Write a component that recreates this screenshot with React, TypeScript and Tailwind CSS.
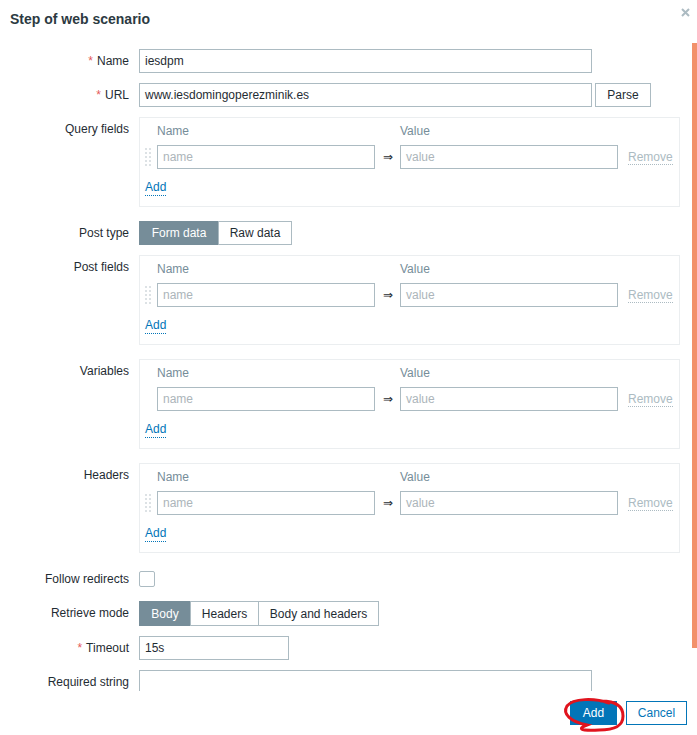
import React from 'react';

const Label: React.FC<{ text: string; required?: boolean }> = ({ text, required }) => (
  <div className="w-[129px] shrink-0 text-right h-[24px] leading-[24px] text-[#1f2c33]">
    {required && <span className="text-[#e45959] mr-[4px]">*</span>}
    {text}
  </div>
);

const Input: React.FC<{ value?: string; placeholder?: string; className?: string }> = ({ value, placeholder, className }) => (
  <div className={`h-[24px] border border-[#acbbc2] bg-white px-[5px] leading-[22px] ${className ?? ''}`}>
    {value ? <span className="text-[#1f2c33]">{value}</span> : <span className="text-[#acb5ba]">{placeholder}</span>}
  </div>
);

const DragHandle: React.FC<{ hidden?: boolean }> = ({ hidden }) => (
  <div className="w-[6px] h-[18px] grid grid-cols-2 gap-x-[2px] gap-y-[2px] content-center">
    {Array.from({ length: 10 }).map((_, i) => (
      <span key={i} className={`w-[2px] h-[2px] ${hidden ? '' : 'bg-[#dde2e5]'}`} />
    ))}
  </div>
);

const PairBox: React.FC<{ noHandle?: boolean }> = ({ noHandle }) => (
  <div className="w-[541px] h-[90px] border border-[#ebeef0] pt-[3px] pl-[5px] mb-[4px]">
    <div className="flex h-[20px] leading-[20px] text-[#768d99]">
      <div className="w-[12px]" />
      <div className="w-[218px]">Name</div>
      <div className="w-[25px]" />
      <div>Value</div>
    </div>
    <div className="flex items-center mt-[4px]">
      <DragHandle hidden={noHandle} />
      <div className="w-[6px]" />
      <Input placeholder="name" className="w-[218px]" />
      <div className="w-[25px] text-center text-[#1f2c33]">⇒</div>
      <Input placeholder="value" className="w-[218px]" />
      <span className="ml-[10px] text-[#acbbc2] border-b border-dotted border-[#acbbc2] leading-[14px]">Remove</span>
    </div>
    <div className="mt-[10px] h-[16px] leading-[16px]">
      <span className="text-[#0275b8] border-b border-dotted border-[#0275b8] pb-[1px]">Add</span>
    </div>
  </div>
);

const Segmented: React.FC<{ items: { label: string; w: string }[]; active: number; h: string }> = ({ items, active, h }) => (
  <div className={`flex ${h}`}>
    {items.map((it, i) => (
      <div
        key={it.label}
        className={`${it.w} flex items-center justify-center border ${i > 0 ? '-ml-px' : ''} ${
          i === active ? 'bg-[#768d99] border-[#768d99] text-white' : 'bg-white border-[#acbbc2] text-[#1f2c33]'
        }`}
      >
        {it.label}
      </div>
    ))}
  </div>
);

const Row: React.FC<{ label: string; required?: boolean; children: React.ReactNode }> = ({ label, required, children }) => (
  <div className="flex gap-[10px] items-start">
    <Label text={label} required={required} />
    {children}
  </div>
);

export default function App() {
  return (
    <div className="w-[697px] h-[735px] bg-white relative overflow-hidden font-['Liberation_Sans',Arial,sans-serif] text-[12px] text-[#1f2c33]">
      {/* Header */}
      <div className="h-[40px] flex items-center justify-between pl-[10px] pr-[7px]">
        <h1 className="text-[14px] font-bold text-[#2c3a42] -mt-[1px]">Step of web scenario</h1>
        <svg width="9" height="9" viewBox="0 0 9 9" className="self-start mt-[8px]">
          <path d="M1 1 L8 8 M8 1 L1 8" stroke="#acbbc2" strokeWidth="2" />
        </svg>
      </div>

      {/* Body */}
      <div className="flex h-[651px] overflow-hidden">
        <div className="w-[692px] pt-[9px] flex flex-col gap-[10px]">
          <Row label="Name" required>
            <Input value="iesdpm" className="w-[453px]" />
          </Row>
          <Row label="URL" required>
            <div className="flex gap-[3px]">
              <Input value="www.iesdomingoperezminik.es" className="w-[453px]" />
              <div className="w-[56px] h-[24px] border border-[#acbbc2] flex items-center justify-center">Parse</div>
            </div>
          </Row>
          <Row label="Query fields">
            <PairBox />
          </Row>
          <Row label="Post type">
            <Segmented
              h="h-[24px]"
              active={0}
              items={[
                { label: 'Form data', w: 'w-[80px]' },
                { label: 'Raw data', w: 'w-[74px]' },
              ]}
            />
          </Row>
          <Row label="Post fields">
            <PairBox />
          </Row>
          <Row label="Variables">
            <PairBox noHandle />
          </Row>
          <Row label="Headers">
            <PairBox />
          </Row>
          <Row label="Follow redirects">
            <div className="h-[24px] flex items-center">
              <div className="w-[16px] h-[16px] border border-[#acbbc2] rounded-[2px]" />
            </div>
          </Row>
          <Row label="Retrieve mode">
            <Segmented
              h="h-[25px]"
              active={0}
              items={[
                { label: 'Body', w: 'w-[52px]' },
                { label: 'Headers', w: 'w-[69px]' },
                { label: 'Body and headers', w: 'w-[121px]' },
              ]}
            />
          </Row>
          <Row label="Timeout" required>
            <Input value="15s" className="w-[150px]" />
          </Row>
          <Row label="Required string">
            <div className="w-[453px] h-[60px] border border-[#acbbc2]" />
          </Row>
        </div>
        {/* scrollbar */}
        <div className="w-[5px] pt-[3px]">
          <div className="h-[605px] bg-[#f2916b]" />
        </div>
      </div>

      {/* Footer */}
      <div className="flex justify-end gap-[9px] pr-[10px] pt-[10px] relative">
        <div className="w-[47px] h-[24px] bg-[#0275b8] text-white flex items-center justify-center">Add</div>
        <div className="w-[61px] h-[24px] border border-[#0275b8] text-[#0275b8] flex items-center justify-center">Cancel</div>
        <svg width="72" height="42" viewBox="0 0 72 42" className="absolute left-[559px] top-[4px]" fill="none">
          <path
            d="M50 8 C36 3, 14 3, 8 11 C3 19, 12 27, 28 30 C20 33, 18 36, 40 35 C56 35, 64 31, 64 21 C64 11, 57 6, 42 6"
            stroke="#e0141e"
            strokeWidth="3"
            strokeLinecap="round"
          />
        </svg>
      </div>
    </div>
  );
}
